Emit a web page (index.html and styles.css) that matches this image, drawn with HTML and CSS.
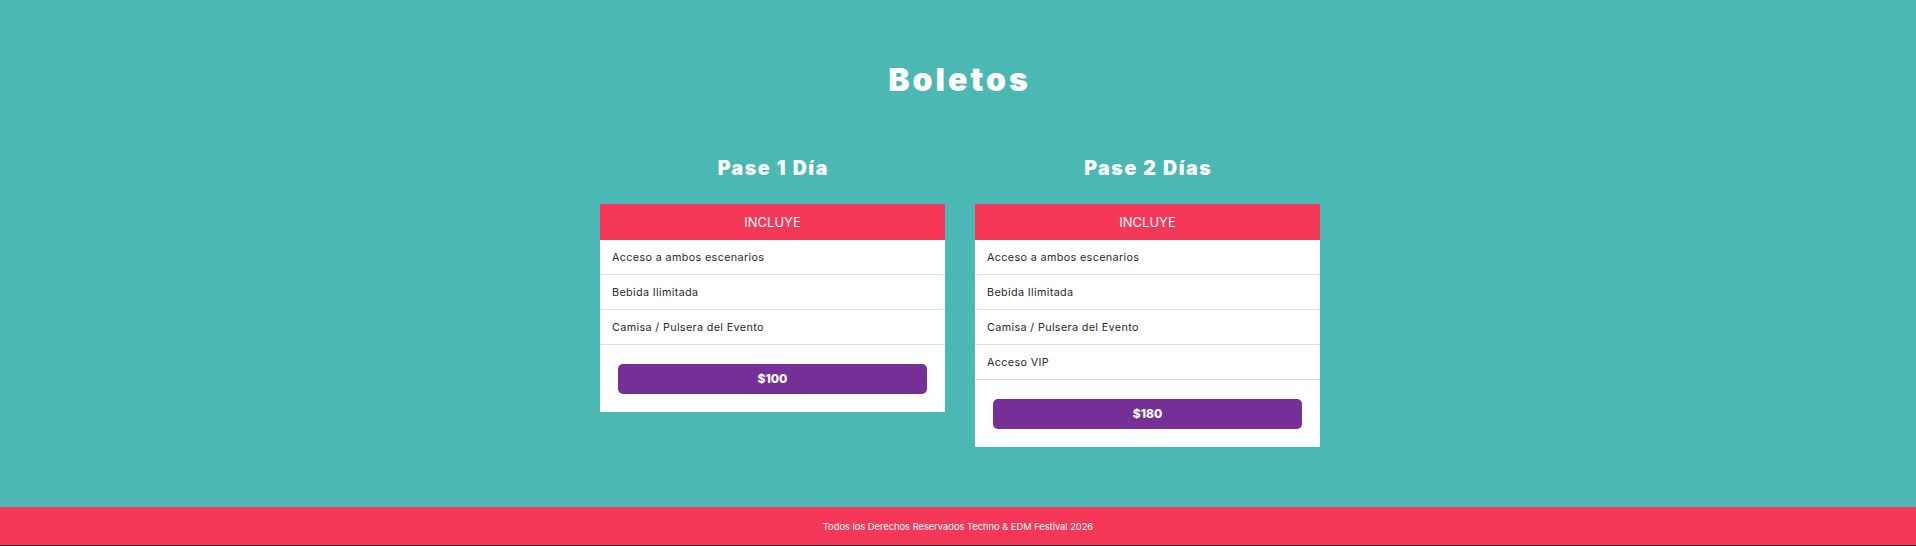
FILE: index.html
```html
<!DOCTYPE html>
<html lang="es">
<head>
<meta charset="utf-8">
<title>Boletos</title>
<link rel="stylesheet" href="styles.css">
</head>
<body>
<main class="tickets">
  <h1 class="tickets-title">Boletos</h1>
  <div class="plans">
    <div class="plan">
      <h2 class="plan-name">Pase 1 Día</h2>
      <div class="card">
        <div class="card-head">INCLUYE</div>
        <ul class="card-list">
          <li>Acceso a ambos escenarios</li>
          <li>Bebida Ilimitada</li>
          <li>Camisa / Pulsera del Evento</li>
        </ul>
        <div class="card-foot"><a class="price" href="#">$100</a></div>
      </div>
    </div>
    <div class="plan">
      <h2 class="plan-name">Pase 2 Días</h2>
      <div class="card">
        <div class="card-head">INCLUYE</div>
        <ul class="card-list">
          <li>Acceso a ambos escenarios</li>
          <li>Bebida Ilimitada</li>
          <li>Camisa / Pulsera del Evento</li>
          <li>Acceso VIP</li>
        </ul>
        <div class="card-foot"><a class="price" href="#">$180</a></div>
      </div>
    </div>
  </div>
</main>
<footer class="site-footer">Todos los Derechos Reservados Techno &amp; EDM Festival 2026</footer>
</body>
</html>
```

FILE: styles.css
```css
* { box-sizing: border-box; }
html, body { margin: 0; padding: 0; }
body {
  background: #4cb8b3;
  font-family: "Inter", "DejaVu Sans", sans-serif;
  color: #222;
}
.tickets {
  padding: 62px 0 60px;
}
.tickets-title {
  margin: 0 0 59px;
  text-align: center;
  color: #fff;
  font-size: 32px;
  line-height: 36px;
  font-weight: 900;
  letter-spacing: 3px;
  text-indent: 3px;
}
.plans {
  display: flex;
  justify-content: center;
  align-items: flex-start;
  gap: 30px;
  padding-left: 4px;
}
.plan {
  width: 345px;
}
.plan-name {
  margin: 0 0 25px;
  text-align: center;
  color: #fff;
  font-size: 19.5px;
  line-height: 22px;
  font-weight: 900;
  letter-spacing: 1.6px;
  text-indent: 1.6px;
}
.card {
  background: #fff;
}
.card-head {
  background: #f53758;
  color: #fff;
  height: 36px;
  line-height: 36px;
  text-align: center;
  font-size: 13px;
  font-weight: 400;
}
.card-list {
  list-style: none;
  margin: 0;
  padding: 0;
}
.card-list li {
  height: 35px;
  line-height: 35px;
  padding-left: 12px;
  border-bottom: 1px solid #dedede;
  font-size: 10.8px;
  letter-spacing: 0.35px;
  color: #2a2a2a;
}
.card-foot {
  padding: 19px 18px 18px;
}
.price {
  display: block;
  height: 30px;
  line-height: 30px;
  background: #762f96;
  border-radius: 5px;
  color: #fff;
  text-align: center;
  text-decoration: none;
  font-size: 12px;
  font-weight: 800;
}
.site-footer {
  background: #f53758;
  color: #fff;
  height: 39px;
  line-height: 40px;
  text-align: center;
  font-size: 9.3px;
  border-bottom: 1px solid #333;
}
```
